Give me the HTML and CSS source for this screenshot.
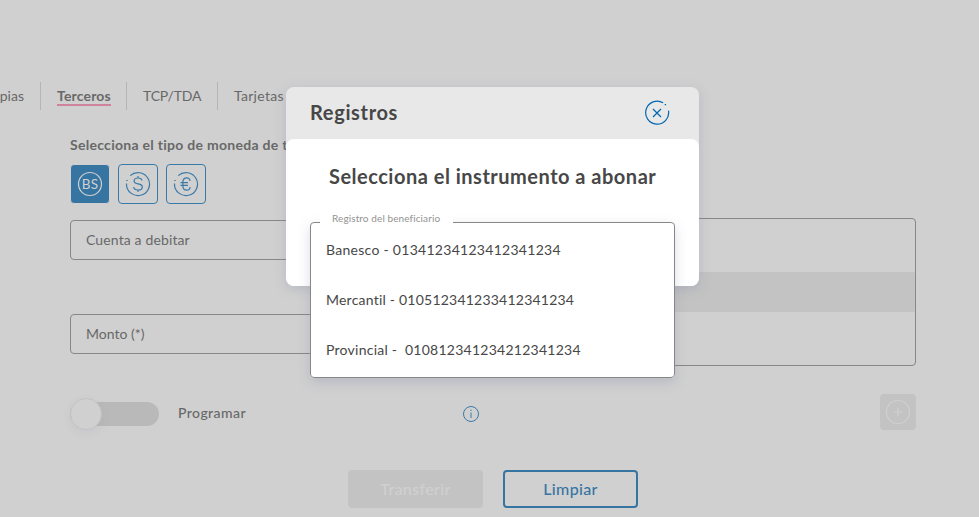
FILE: index.html
```html
<!DOCTYPE html>
<html lang="es">
<head>
<meta charset="utf-8">
<title>Transferencias</title>
<link rel="stylesheet" href="styles.css">
</head>
<body>
<main class="page">
  <nav class="tabs">
    <a class="tab tab-first">pias</a>
    <a class="tab tab-active"><span>Terceros</span></a>
    <a class="tab tab-tcp">TCP/TDA</a>
    <a class="tab tab-cards">Tarjetas</a>
  </nav>
  <section class="form">
    <p class="form-label">Selecciona el tipo de moneda de t</p>
    <div class="currencies">
      <button class="currency currency-active" aria-label="Bolívares">
        <svg width="26" height="26" viewBox="0 0 26 26"><circle cx="13" cy="13" r="11.5"/><text x="13" y="17.8" text-anchor="middle">BS</text></svg>
      </button>
      <button class="currency" aria-label="Dólares">
        <svg width="26" height="26" viewBox="0 0 26 26"><path d="M5.2 4.6A11.5 11.5 0 1 1 1.5 12.6M1.2 9.5h1.5M17 9.500c-.3-1.800-1.700-2.500-3.900-2.500-2.300 0-4 .9-4 2.900 0 4.300 8.200 1.700 8.200 6 0 2.200-1.900 3.100-4.200 3.100-2.500 0-4.200-.9-4.400-3M13 5v2m0 12v2"/></svg>
      </button>
      <button class="currency" aria-label="Euros">
        <svg width="26" height="26" viewBox="0 0 26 26"><path d="M5.200 4.600A11.5 11.5 0 1 1 1.500 12.600M1.200 9.500h1.500M17 10c0-2-1.300-3.200-3.300-3.200-2.500 0-3.800 1.700-3.800 4.200v4c0 2.500 1.300 4.200 3.800 4.200 2 0 3.300-1.200 3.300-3.200M7.500 11.700h7.500M7.500 14.300h7.500"/></svg>
      </button>
    </div>
    <div class="columns">
      <div class="column">
        <div class="field field-account">Cuenta a debitar</div>
        <div class="field field-amount">Monto (*)</div>
      </div>
      <div class="accounts"><div class="accounts-row"></div></div>
    </div>
    <div class="options">
      <span class="switch"><span class="switch-knob"></span></span>
      <span class="switch-label">Programar</span>
      <svg class="info" width="18" height="18" viewBox="0 0 18 18"><circle cx="9" cy="9" r="7.500"/><path d="M9 7.500v5.500M9 4.700v1.300"/></svg>
      <button class="add" aria-label="Agregar">
        <svg width="26" height="26" viewBox="0 0 26 26"><circle cx="13" cy="13" r="11.5"/><path d="M8.500 13h9M13 8.500v9"/></svg>
      </button>
    </div>
    <div class="actions">
      <button class="action action-send"><span>Transferir</span></button>
      <button class="action action-clear"><span>Limpiar</span></button>
    </div>
  </section>
</main>
<div class="modal" role="dialog">
  <header class="modal-header">
    <h2 class="modal-title">Registros</h2>
    <svg class="close" width="26" height="26" viewBox="0 0 26 26"><path d="M19.100 2.800A11.500 11.500 0 1 0 24.500 10.700M20.700 4.600h1.400M9 9l8 8M17 9l-8 8"/></svg>
  </header>
  <div class="modal-body">
    <h3 class="modal-question">Selecciona el instrumento a abonar</h3>
    <fieldset class="select">
      <legend class="select-label"><span>Registro del beneficiario</span></legend>
      <ul class="select-list">
        <li class="bank1">Banesco - 01341234123412341234</li>
        <li class="bank2">Mercantil - 010512341233412341234</li>
        <li class="bank3">Provincial -&nbsp; 010812341234212341234</li>
      </ul>
    </fieldset>
  </div>
</div>
</body>
</html>
```
FILE: styles.css
```css
* { box-sizing: border-box; margin: 0; padding: 0; }
body {
  width: 979px;
  height: 517px;
  overflow: hidden;
  position: relative;
  background: #d0d0d0;
  color: #686868;
  font: 14px/20px Lato, "Noto Sans", sans-serif;
  font-variant-ligatures: none;
}
button { font: inherit; letter-spacing: inherit; border: 0; background: none; }
svg { display: block; fill: none; stroke: currentColor; stroke-width: 1.2; }
.page { padding-top: 82px; }
.tabs { display: flex; height: 28px; line-height: 28px; white-space: nowrap; }
.tab { border-left: 1px solid #b5b5b5; padding-left: 16px; }
.tab-first { width: 40px; display: flex; justify-content: flex-end; padding: 0 16px 0 0; border: 0; }
.tab-active { width: 86px; font-weight: 700; letter-spacing: .17px; }
.tab-active span { display: inline-block; height: 24px; border-bottom: 2px solid #cf849c; }
.tab-tcp { width: 91px; letter-spacing: -.15px; }
.tab-cards { letter-spacing: .3px; }
.form { width: 846px; margin-left: 70px; padding-top: 25px; }
.form-label { font-weight: 700; white-space: nowrap; letter-spacing: .28px; }
.currencies { display: flex; gap: 8px; margin-top: 9px; }
.currency {
  width: 40px; height: 40px;
  display: grid; place-items: center;
  border: 1px solid #3a7aa7; border-radius: 4px;
  color: #3a7aa7;
}
.currency-active { background: #3675a2; border-color: #d0d0d0; color: #d0d0d0; }
.currency text { font-size: 13.5px; letter-spacing: .2px; fill: currentColor; stroke: none; }
.columns { display: grid; grid-template-columns: 411px 411px; gap: 24px; margin-top: 14px; }
.column { display: flex; flex-direction: column; gap: 54px; padding-top: 2px; }
.field { height: 40px; border: 1px solid #878787; border-radius: 4px; padding: 0 15px; line-height: 38px; }
.field-account { letter-spacing: .13px; }
.accounts { height: 148px; border: 1px solid #878787; border-radius: 4px; padding-top: 53px; }
.accounts-row { height: 40px; border-radius: 2px; background: #c3c3c3; }
.options { display: flex; align-items: center; height: 36px; margin-top: 28px; }
.switch { width: 89px; height: 24px; margin-top: 4px; border-radius: 12px; background: #b9b9b9; display: flex; align-items: center; }
.switch-knob { width: 32px; height: 32px; flex: none; border-radius: 50%; background: #d0d0d0; border: 1px solid #c3c3c6; box-shadow: 0 3px 8px rgba(130,130,170,.1); }
.switch-label { width: 284px; margin: 2px 0 0 19px; font-weight: 500; letter-spacing: .42px; }
.info { margin-top: 4px; color: #3a7aa7; stroke-width: 1; }
.add { width: 36px; height: 36px; margin-left: auto; display: grid; place-items: center; border-radius: 4px; background: #c3c3c3; color: #d0d0d0; }
.actions { display: flex; gap: 20px; margin: 40px 0 0 278px; font-size: 16px; font-weight: 500; letter-spacing: .35px; }
.action { width: 135px; height: 38px; padding-bottom: 1px; border-radius: 4px; }
.action-send { background: #c3c3c3; color: #d0d0d0; }
.action-clear { border: 2px solid #3675a2; color: #3675a2; }
.modal {
  position: absolute; left: 286px; top: 87px;
  width: 413px; height: 199px;
  border-radius: 8px; background: #e8e8e8; color: #474747;
  box-shadow: 0 3px 12px rgba(130,135,170,.3);
}
.modal-header { height: 52px; padding: 0 29px 0 24px; display: flex; align-items: center; justify-content: space-between; }
.modal-title { font-size: 20px; line-height: 28px; letter-spacing: .65px; margin-top: -2px; }
.close { color: #0067b1; }
.modal-body { height: 147px; padding: 23px 24px 0; background: #fff; border-radius: 8px; }
.modal-question { font-size: 20px; line-height: 28px; padding-left: 19px; white-space: nowrap; letter-spacing: .5px; }
.select {
  height: 164px; margin-top: 24px; padding: 0 0 0 9px;
  border: 1px solid #878787; border-radius: 4px;
  background: #fff; min-width: 0;
  box-shadow: 0 4px 12px rgba(130,135,170,.3);
}
.select-label { width: 133px; height: 16px; padding-left: 12px; font-size: 10px; line-height: 8px; color: #929292; white-space: nowrap; background: #fff; letter-spacing: .1px; }
.select-list { list-style: none; padding-left: 6px; }
.select-list li { height: 50px; line-height: 50px; white-space: nowrap; }
.select-list li:first-child { height: 45px; line-height: 40px; }
.bank1 { letter-spacing: .28px; }
.bank2 { letter-spacing: .22px; }
.bank3 { letter-spacing: .25px; }
```
